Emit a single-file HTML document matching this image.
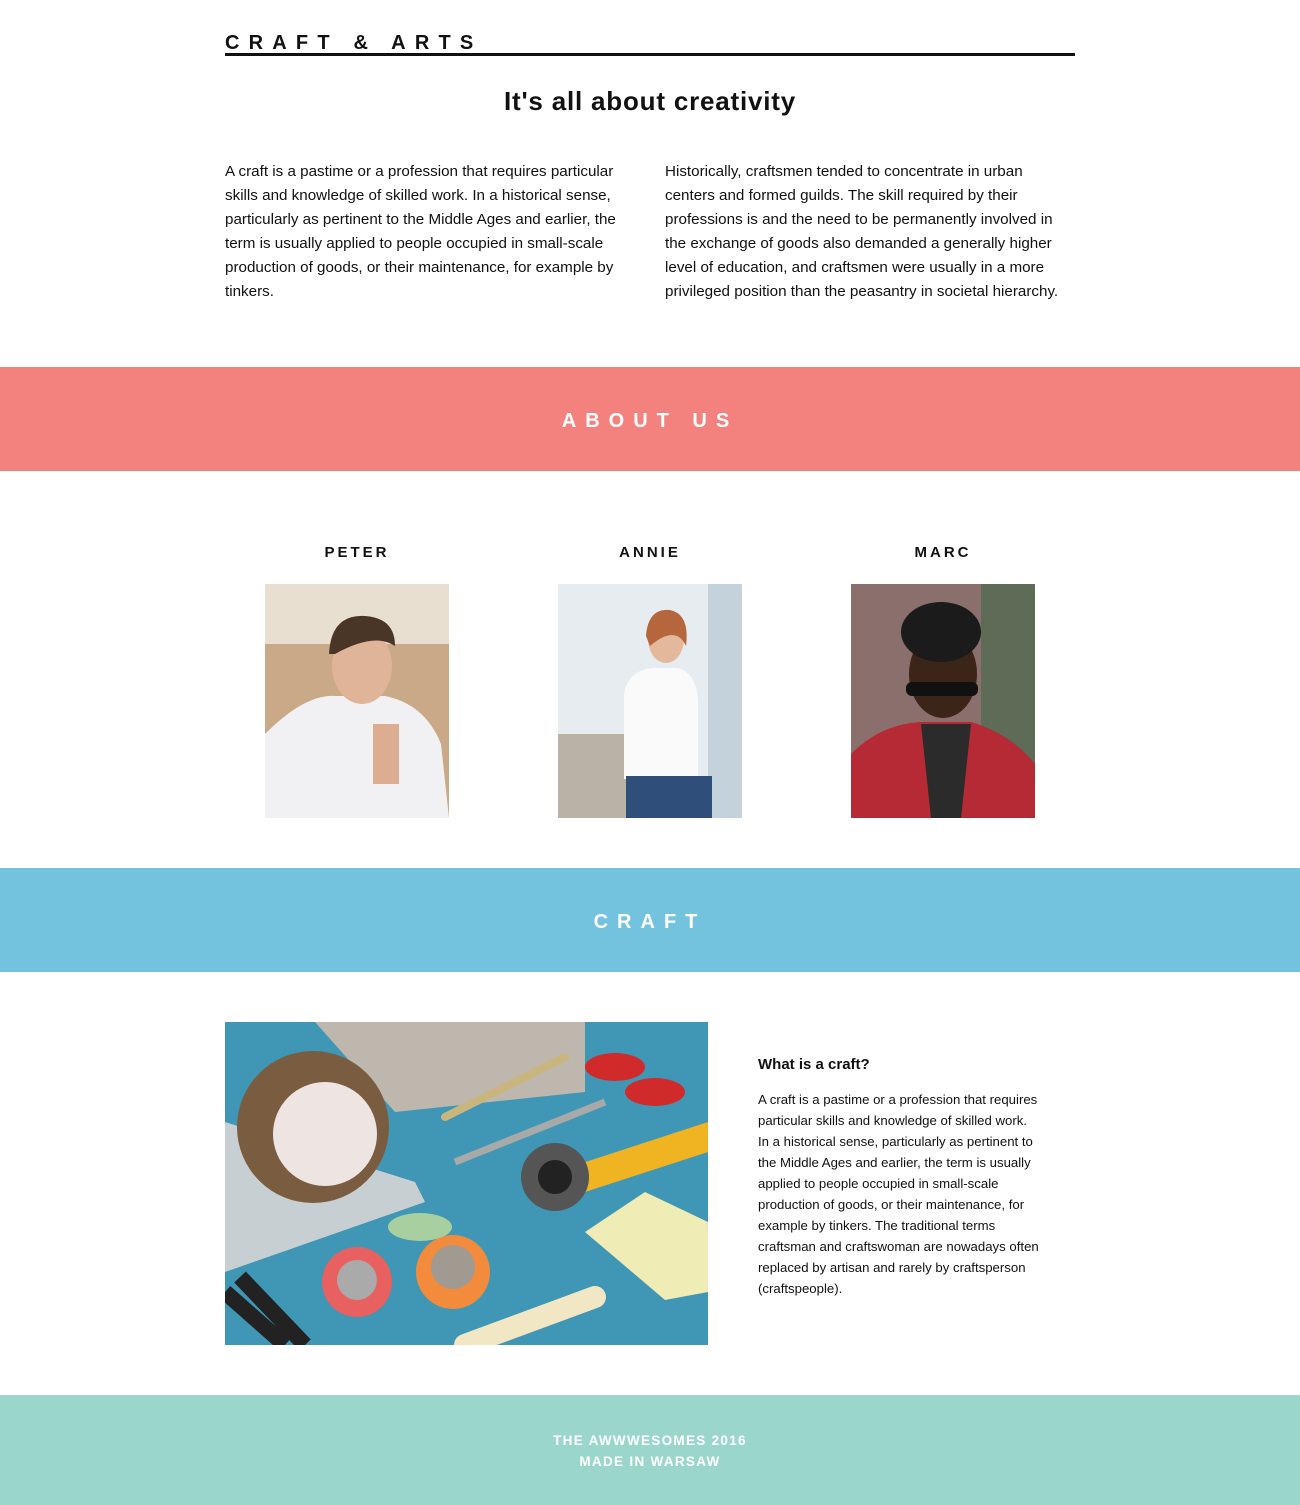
<!DOCTYPE html>
<html><head><meta charset="utf-8">
<style>
*{margin:0;padding:0;box-sizing:border-box}
body{width:1300px;height:1505px;position:relative;background:#fff;font-family:"Liberation Sans",sans-serif;color:#111;overflow:hidden}
.a{position:absolute}
.logo{left:225px;top:32px;font-size:20px;font-weight:bold;letter-spacing:9.2px;white-space:nowrap}
.rule{left:225px;top:53px;width:850px;height:3px;background:#111}
.h1{left:0;width:1300px;top:86px;text-align:center;font-size:26px;font-weight:bold;letter-spacing:0.8px}
.p{font-size:15.2px;line-height:24px;white-space:nowrap;top:160px}
.band{left:0;width:1300px;color:#fff;font-weight:bold;font-size:20px;letter-spacing:9px;text-align:center}
.name{font-size:15px;font-weight:bold;letter-spacing:3px;width:184px;text-align:center;top:544px}
.ph{top:584px;width:184px;height:234px}
.ct{left:758px;font-size:13.2px;line-height:21px;white-space:nowrap;top:1089px}
</style></head><body>
<div class="a logo">CRAFT &amp; ARTS</div>
<div class="a rule"></div>
<div class="a h1">It's all about creativity</div>
<div class="a p" style="left:225px">A craft is a pastime or a profession that requires particular<br>skills and knowledge of skilled work. In a historical sense,<br>particularly as pertinent to the Middle Ages and earlier, the<br>term is usually applied to people occupied in small-scale<br>production of goods, or their maintenance, for example by<br>tinkers.</div>
<div class="a p" style="left:665px">Historically, craftsmen tended to concentrate in urban<br>centers and formed guilds. The skill required by their<br>professions is and the need to be permanently involved in<br>the exchange of goods also demanded a generally higher<br>level of education, and craftsmen were usually in a more<br>privileged position than the peasantry in societal hierarchy.</div>

<div class="a band" style="top:367px;height:104px;line-height:108px;background:#f3827e">ABOUT US</div>

<div class="a name" style="left:265px">PETER</div>
<div class="a name" style="left:558px">ANNIE</div>
<div class="a name" style="left:851px">MARC</div>

<svg class="a ph" style="left:265px" viewBox="0 0 184 234">
<rect width="184" height="234" fill="#c9a987"/><rect width="184" height="60" fill="#e9dfd0"/>
<path d="M0 150 Q40 110 70 112 L120 112 Q160 120 176 160 L184 234 L0 234Z" fill="#f1f1f3"/>
<ellipse cx="97" cy="82" rx="30" ry="38" fill="#e0b498"/>
<path d="M64 70 Q66 30 100 32 Q130 34 130 62 Q110 48 70 70Z" fill="#4a3626"/>
<rect x="108" y="140" width="26" height="60" fill="#dcad90"/>
</svg>
<svg class="a ph" style="left:558px" viewBox="0 0 184 234">
<rect width="184" height="234" fill="#e6ecef"/><rect x="150" width="34" height="234" fill="#c4d2dc"/>
<rect x="0" y="150" width="70" height="84" fill="#b9b2a6"/>
<path d="M66 110 Q70 86 95 84 L120 84 Q140 90 140 120 L140 195 L66 195Z" fill="#fafafa"/>
<rect x="68" y="192" width="86" height="42" fill="#2f4e79"/>
<ellipse cx="108" cy="55" rx="18" ry="24" fill="#e3b89b"/>
<path d="M88 52 Q90 24 112 26 Q132 30 128 62 Q118 40 92 62Z" fill="#b5663d"/>
</svg>
<svg class="a ph" style="left:851px" viewBox="0 0 184 234">
<rect width="184" height="234" fill="#8a6f6c"/><rect x="130" width="54" height="234" fill="#5d6b57"/>
<path d="M0 170 Q30 140 70 138 L120 138 Q160 150 184 180 L184 234 L0 234Z" fill="#b52a35"/>
<path d="M70 140 L120 140 L110 234 L80 234Z" fill="#2b2b2b"/>
<ellipse cx="92" cy="90" rx="34" ry="44" fill="#3b2418"/>
<ellipse cx="90" cy="48" rx="40" ry="30" fill="#1b1b1b"/>
<rect x="55" y="98" width="72" height="14" rx="6" fill="#111"/>
</svg>

<div class="a band" style="top:868px;height:104px;line-height:108px;background:#73c3df">CRAFT</div>

<svg class="a" style="left:225px;top:1022px" width="483" height="323" viewBox="0 0 483 323">
<rect width="483" height="323" fill="#3f97b5"/>
<path d="M90 0 L360 0 L360 70 L170 90 Z" fill="#bdb7ad"/>
<path d="M0 100 L190 160 L200 180 L0 250Z" fill="#c7cfd2"/>
<circle cx="88" cy="105" r="76" fill="#7a5c40"/><circle cx="100" cy="112" r="52" fill="#eee4e2"/>
<path d="M340 35 L220 95" stroke="#c9b67f" stroke-width="8" stroke-linecap="round"/>
<path d="M380 80 L230 140" stroke="#a9a9a9" stroke-width="7"/>
<ellipse cx="390" cy="45" rx="30" ry="14" fill="#d12a2a"/><ellipse cx="430" cy="70" rx="30" ry="14" fill="#d12a2a"/>
<path d="M330 150 L483 100 L483 130 L360 170Z" fill="#f0b423"/>
<circle cx="330" cy="155" r="34" fill="#555"/><circle cx="330" cy="155" r="17" fill="#222"/>
<path d="M360 210 L420 170 L483 200 L483 270 L440 278Z" fill="#efecb5"/>
<circle cx="132" cy="260" r="35" fill="#e8605f"/><circle cx="132" cy="258" r="20" fill="#aaa"/>
<circle cx="228" cy="250" r="37" fill="#f28b3c"/><circle cx="228" cy="245" r="22" fill="#a09a90"/>
<ellipse cx="195" cy="205" rx="32" ry="14" fill="#a8cf9f"/>
<path d="M240 323 L370 275" stroke="#f2e7c4" stroke-width="22" stroke-linecap="round"/>
<path d="M0 270 L60 323 M15 255 L80 323" stroke="#222" stroke-width="16"/>
</svg>

<div class="a" style="left:758px;top:1056px;font-size:15px;font-weight:bold">What is a craft?</div>
<div class="a ct">A craft is a pastime or a profession that requires<br>particular skills and knowledge of skilled work.<br>In a historical sense, particularly as pertinent to<br>the Middle Ages and earlier, the term is usually<br>applied to people occupied in small-scale<br>production of goods, or their maintenance, for<br>example by tinkers. The traditional terms<br>craftsman and craftswoman are nowadays often<br>replaced by artisan and rarely by craftsperson<br>(craftspeople).</div>

<div class="a band" style="top:1395px;height:110px;background:#9ad7ca;font-size:13.5px;letter-spacing:1.3px;line-height:21px;padding-top:35px">THE AWWWESOMES 2016<br>MADE IN WARSAW</div>
</body></html>
